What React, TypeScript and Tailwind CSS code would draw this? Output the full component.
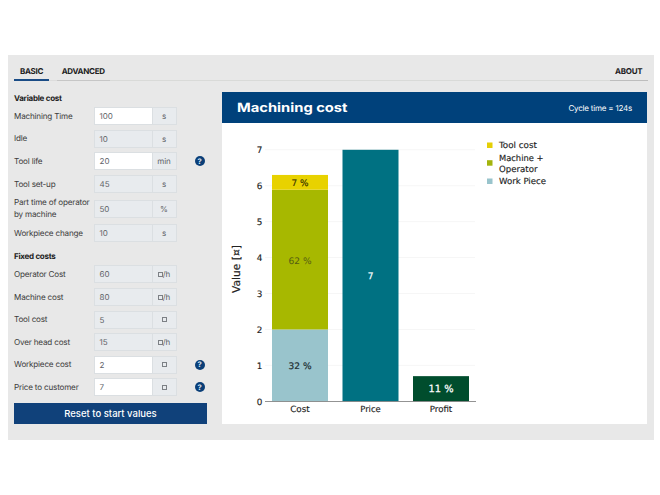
type Field = {
  label: string;
  value: string;
  unit: string;
  editable?: boolean;
  help?: boolean;
  tall?: boolean;
};

const variableCosts: Field[] = [
  { label: 'Machining Time', value: '100', unit: 's', editable: true },
  { label: 'Idle', value: '10', unit: 's' },
  { label: 'Tool life', value: '20', unit: 'min', editable: true, help: true },
  { label: 'Tool set-up', value: '45', unit: 's' },
  { label: 'Part time of operator by machine', value: '50', unit: '%', tall: true },
  { label: 'Workpiece change', value: '10', unit: 's' },
];

const fixedCosts: Field[] = [
  { label: 'Operator Cost', value: '60', unit: '¤/h' },
  { label: 'Machine cost', value: '80', unit: '¤/h' },
  { label: 'Tool cost', value: '5', unit: '¤' },
  { label: 'Over head cost', value: '15', unit: '¤/h' },
  { label: 'Workpiece cost', value: '2', unit: '¤', editable: true, help: true },
  { label: 'Price to customer', value: '7', unit: '¤', editable: true, help: true },
];

function Unit({ text }: { text: string }) {
  if (!text.startsWith('¤')) return <span>{text}</span>;
  return (
    <span className="flex items-center">
      <span className="size-[5px] shrink-0 border border-[#7c8085]" aria-label="¤" />
      {text.slice(1)}
    </span>
  );
}

function FieldRow({ field }: { field: Field }) {
  return (
    <div className={`flex items-center ${field.tall ? 'h-[26.7px]' : 'h-[22.6px]'}`}>
      <div className="w-[79.5px] shrink-0 pt-[0.5px] text-[8.1px] leading-[11.5px] tracking-[-0.18px] whitespace-nowrap text-[#3c3c3c]">
        {field.tall ? (
          <>
            Part time of operator
            <br />
            by machine
          </>
        ) : (
          field.label
        )}
      </div>
      <div className="flex h-[18px] w-[83px] shrink-0 border border-[#dbdfe2] text-[8px] text-[#5d6166]">
        <div className={`flex flex-1 items-center pl-[5px] ${field.editable ? 'bg-white' : 'bg-[#e8ebee]'}`}>
          {field.value}
        </div>
        <div className="flex w-[24px] items-center justify-center border-l border-[#dbdfe2] bg-[#e8ebee]">
          <Unit text={field.unit} />
        </div>
      </div>
      {field.help && (
        <div className="ml-[18px] flex size-[10px] items-center justify-center rounded-full bg-[#0b3f78] text-[7.5px] leading-none font-bold text-[#dfeaf5]">
          ?
        </div>
      )}
    </div>
  );
}

const baseline = 401.3 - 123;
const unitHeight = 35.93;
const yOf = (v: number) => baseline - v * unitHeight;

function CostChart() {
  return (
    <svg
      width="425"
      height="301"
      viewBox="0 0 425 301"
      className="block font-['DejaVu_Sans',sans-serif] text-[8.6px]"
      fill="#222"
    >
      {[1, 2, 3, 4, 5, 6, 7].map((v) => (
        <line key={v} x1="43" x2="253" y1={yOf(v)} y2={yOf(v)} stroke="#f6f6f6" strokeWidth="1" />
      ))}
      {[0, 1, 2, 3, 4, 5, 6, 7].map((v) => (
        <text key={v} x="40.3" y={yOf(v) + 3.2} textAnchor="end" className="text-[8.8px]" stroke="#222" strokeWidth="0.15">
          {v}
        </text>
      ))}
      <rect x="50" y={yOf(2)} width="56" height={unitHeight * 2} fill="#99c4cc" />
      <rect x="50" y={yOf(5.89)} width="56" height={unitHeight * 3.89} fill="#a7b800" />
      <rect x="50" y={yOf(6.3)} width="56" height={unitHeight * 0.41} fill="#e8d200" />
      <rect x="120.5" y={yOf(7)} width="56" height={unitHeight * 7} fill="#007182" />
      <rect x="191" y={yOf(0.7)} width="56" height={unitHeight * 0.7} fill="#004d2d" />
      <line x1="43" x2="254" y1={baseline + 0.2} y2={baseline + 0.2} stroke="#777" strokeWidth="0.8" />

      <g textAnchor="middle">
        <text x="78" y="62.8" textLength="17" lengthAdjust="spacingAndGlyphs" className="text-[9px]" fill="#3d3800" stroke="#3d3800" strokeWidth="0.2">7 %</text>
        <text x="78" y="140.5" textLength="23" lengthAdjust="spacingAndGlyphs" className="text-[9px]" fill="#555d12">62 %</text>
        <text x="78" y="246" textLength="23" lengthAdjust="spacingAndGlyphs" className="text-[9px]" fill="#1f3034" stroke="#1f3034" strokeWidth="0.2">32 %</text>
        <text x="148.5" y="156" className="text-[9px]" fill="#fff" stroke="#fff" strokeWidth="0.25">7</text>
        <text x="219" y="269.3" textLength="25" lengthAdjust="spacingAndGlyphs" className="text-[9.8px]" fill="#fff" stroke="#fff" strokeWidth="0.25">11 %</text>
        <g stroke="#222" strokeWidth="0.15">
          <text x="78" y="289.3" textLength="19.5" lengthAdjust="spacingAndGlyphs">Cost</text>
          <text x="148.5" y="289.3" textLength="20.5" lengthAdjust="spacingAndGlyphs">Price</text>
          <text x="219" y="289.3" textLength="22.5" lengthAdjust="spacingAndGlyphs">Profit</text>
          <text transform="translate(17.8 146) rotate(-90)" textLength="48" lengthAdjust="spacingAndGlyphs" className="text-[10.8px]">
            Value [¤]
          </text>
        </g>
      </g>

      <rect x="265" y="19.5" width="5.5" height="5.5" fill="#e5cf05" />
      <rect x="265" y="37.2" width="5.5" height="5.5" fill="#a3b40d" />
      <rect x="265" y="55.5" width="5.5" height="5.5" fill="#99c4cc" />
      <g stroke="#222" strokeWidth="0.15">
        <text x="277" y="25.4" textLength="38" lengthAdjust="spacingAndGlyphs">Tool cost</text>
        <text x="277" y="38.2" textLength="44.5" lengthAdjust="spacingAndGlyphs">Machine +</text>
        <text x="277" y="49" textLength="38.5" lengthAdjust="spacingAndGlyphs">Operator</text>
        <text x="277" y="61.3" textLength="47" lengthAdjust="spacingAndGlyphs">Work Piece</text>
      </g>
    </svg>
  );
}

export default function App() {
  return (
    <div className="h-[495px] w-[660px] bg-white pt-[54.5px] pl-[7.5px] font-['Inter',sans-serif] [text-rendering:geometricPrecision]">
      <div className="h-[385.5px] w-[646px] bg-[#e8e8e8] px-[6.5px] pt-[8px]">
        <nav className="flex h-[18.5px] text-[8px] font-bold tracking-[-0.27px] text-[#202020]">
          <div className="flex w-[35px] items-center justify-center border-b-2 border-[#1a4c86]">BASIC</div>
          <div className="w-[7.5px] border-b border-[#dcdcdc]" />
          <div className="flex w-[53.5px] items-center justify-center border-b border-[#c6c6c6]">ADVANCED</div>
          <div className="flex-1 border-b border-[#d9dad8]" />
          <div className="mr-[-1px] flex w-[38.5px] items-center justify-center border-b border-[#bdbdbd]">ABOUT</div>
        </nav>
        <div className="flex">
          <section className="w-[208px] pt-[11px]">
            <h2 className="flex h-[13px] items-center pb-[2px] text-[8px] font-bold tracking-[-0.27px] text-[#1c1c1c]">
              Variable cost
            </h2>
            {variableCosts.map((f) => (
              <FieldRow key={f.label} field={f} />
            ))}
            <h2 className="flex h-[18.5px] items-center pt-[4px] text-[8px] font-bold tracking-[-0.27px] text-[#1c1c1c]">
              Fixed costs
            </h2>
            {fixedCosts.map((f) => (
              <FieldRow key={f.label} field={f} />
            ))}
            <button className="mt-[4.5px] flex h-[21px] w-[193px] items-center justify-center bg-[#10417a] pt-px text-[9.5px] font-medium text-white">
              Reset to start values
            </button>
          </section>
          <section className="mt-[11px] h-[332px] w-[425.5px] shrink-0 bg-white">
            <header className="flex h-[31px] items-center justify-between bg-[#00417b] pr-[15px] pl-[15px] text-white">
              <h1 className="origin-left scale-x-[1.16] pt-[3px] text-[12.7px] font-bold">Machining cost</h1>
              <span className="text-[8px] tracking-[-0.2px]">Cycle time = 124s</span>
            </header>
            <CostChart />
          </section>
        </div>
      </div>
    </div>
  );
}
